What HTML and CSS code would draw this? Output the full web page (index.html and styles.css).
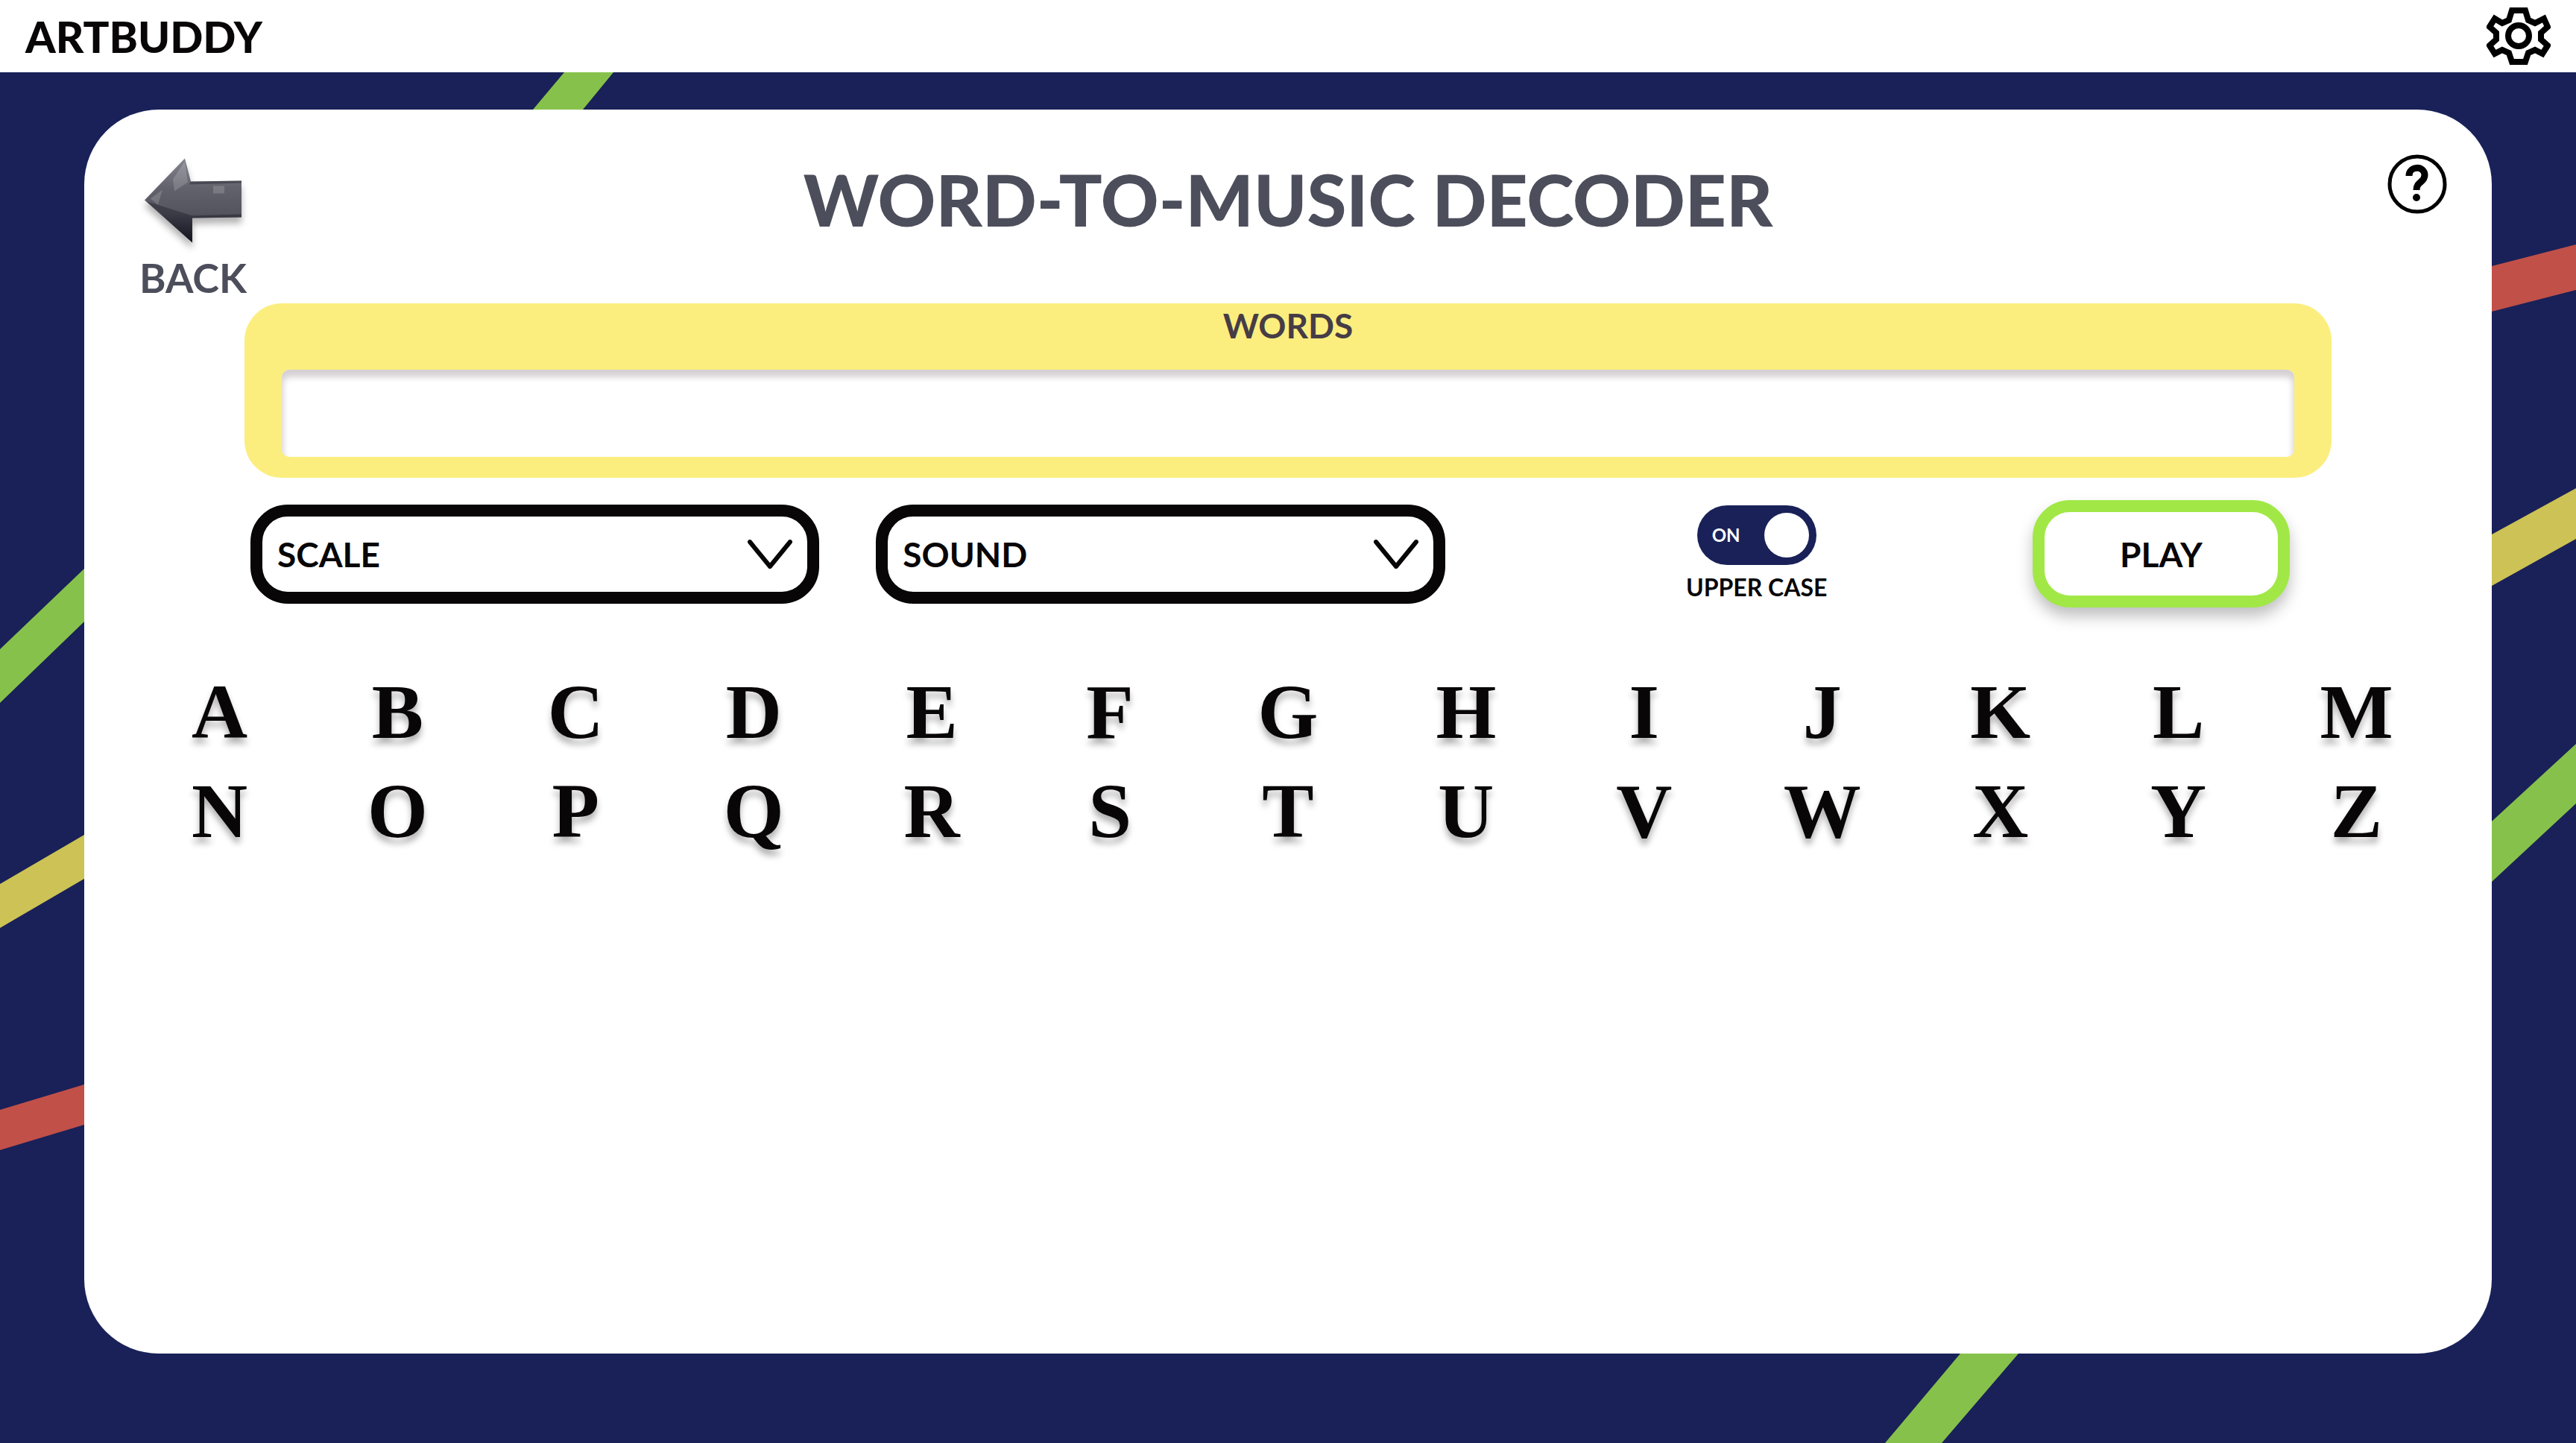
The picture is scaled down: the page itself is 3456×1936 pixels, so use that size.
FILE: index.html
```html
<!DOCTYPE html>
<html lang="en">
<head>
<meta charset="utf-8">
<meta name="viewport" content="width=device-width, initial-scale=1">
<title>ArtBuddy – Word-to-Music Decoder</title>
<link rel="stylesheet" href="styles.css">
</head>
<body>
<header class="topbar">
  <a class="brand" href="#">ARTBUDDY</a>
  <button class="icon-button" type="button" aria-label="Settings">
    <svg class="gear" viewBox="0 0 86 77" fill="none" stroke="#000" stroke-width="8">
      <path d="M34 4H52L56 17L65 21L77 15L82 26L73 34V43L82 51L75 62L65 57L56 61L52 73H34L30 61L21 57L11 62L4 51L13 43V34L4 26L11 15L21 21L30 17Z"/>
      <circle cx="43" cy="38" r="14"/>
    </svg>
  </button>
</header>
<main class="stage">
  <svg class="stripes" viewBox="0 0 3456 1839" preserveAspectRatio="none" aria-hidden="true">
    <path class="green" d="M757 0H823L782 50H715ZM0 774L113 666V737L0 846ZM2630 1719H2708L2605 1839H2529ZM3343 1005L3456 901V981L3343 1086Z"/>
    <path class="yellow" d="M0 1089L113 1023V1082L0 1148ZM3343 620L3456 558V626L3343 689Z"/>
    <path class="red" d="M0 1392L113 1358V1412L0 1446ZM3343 260L3456 231V292L3343 321Z"/>
  </svg>
  <section class="card">
    <div class="card-head">
      <a class="back" href="#">
        <svg class="arrow" viewBox="0 0 130 113">
          <defs>
            <linearGradient id="slate" x1="0" y1="0" x2="0" y2="1">
              <stop offset="0" stop-color="#85858f"/>
              <stop offset=".35" stop-color="#62626c"/>
              <stop offset=".65" stop-color="#54545f"/>
              <stop offset="1" stop-color="#151521"/>
            </linearGradient>
          </defs>
          <path fill="url(#slate)" d="M0 56L54 0L62 31L130 30V79L64 80V113Z"/>
          <path fill="#fff" opacity=".16" d="M92 37H107V47H92ZM38 28L54 4L58 32L40 44ZM8 54L24 42L18 62Z"/>
          <path fill="#11111c" opacity=".35" d="M62 31L130 30V33L60 35ZM64 77L130 75V79L64 80V113L3 58L10 60Z"/>
        </svg>
        <span>BACK</span>
      </a>
      <h1 class="title">WORD-TO-MUSIC DECODER</h1>
      <button class="icon-button help" type="button" aria-label="Help">
        <svg class="help-icon" viewBox="0 0 80 80" fill="none" stroke="#000">
          <circle cx="40" cy="40" r="37" stroke-width="5"/>
          <path d="M29 29C29 15 50 15 50 28C50 38 39 36 39 48" stroke-width="9"/>
          <circle cx="39" cy="58" r="5" fill="#000" stroke="none"/>
        </svg>
      </button>
    </div>
    <form class="decoder">
      <div class="words">
        <label for="words">WORDS</label>
        <input id="words" type="text" autocomplete="off">
      </div>
      <div class="controls">
        <div class="picker">
          <select aria-label="Scale"><option>SCALE</option></select>
          <svg viewBox="0 0 60 40" aria-hidden="true"><path d="M3 3L30 36L57 3"/></svg>
        </div>
        <div class="picker">
          <select aria-label="Sound"><option>SOUND</option></select>
          <svg viewBox="0 0 60 40" aria-hidden="true"><path d="M3 3L30 36L57 3"/></svg>
        </div>
        <label class="toggle">
          <input type="checkbox" checked>
          <span class="track"><span>ON</span><span class="knob"></span></span>
          <span>UPPER CASE</span>
        </label>
        <button class="play" type="button">PLAY</button>
      </div>
    </form>
    <div class="letters">
      <button type="button">A</button><button type="button">B</button><button type="button">C</button><button type="button">D</button><button type="button">E</button><button type="button">F</button><button type="button">G</button><button type="button">H</button><button type="button">I</button><button type="button">J</button><button type="button">K</button><button type="button">L</button><button type="button">M</button>
      <button type="button">N</button><button type="button">O</button><button type="button">P</button><button type="button">Q</button><button type="button">R</button><button type="button">S</button><button type="button">T</button><button type="button">U</button><button type="button">V</button><button type="button">W</button><button type="button">X</button><button type="button">Y</button><button type="button">Z</button>
    </div>
  </section>
</main>
</body>
</html>
```
FILE: styles.css
```css
* {
  box-sizing: border-box;
}

body {
  margin: 0;
  min-height: 100vh;
  display: flex;
  flex-direction: column;
  background: #192158;
  color: #080607;
  font-family: Lato, "Open Sans", sans-serif;
  font-weight: 700;
}

button,
input,
select {
  font: inherit;
  color: inherit;
}

button {
  padding: 0;
  border: 0;
  background: none;
  cursor: pointer;
}

a {
  color: inherit;
  text-decoration: none;
}

svg {
  display: block;
}

.topbar {
  height: 97px;
  padding: 0 34px;
  display: flex;
  align-items: center;
  justify-content: space-between;
  background: #fff;
}

.brand {
  font-size: 58px;
  font-weight: 900;
  line-height: 80px;
}

.gear {
  width: 86px;
  height: 77px;
}

.stage {
  position: relative;
  flex: 1;
  display: flex;
  padding: 50px 113px 120px;
}

.stripes {
  position: absolute;
  inset: 0;
  width: 100%;
  height: 100%;
}

.green {
  fill: #86c24b;
}

.yellow {
  fill: #cdc255;
}

.red {
  fill: #c15048;
}

.card {
  position: relative;
  flex: 1;
  border-radius: 100px;
  background: #fff;
}

.card-head {
  height: 260px;
  padding: 60px 60px 0;
  display: grid;
  grid-template-columns: 1fr auto 1fr;
  align-items: start;
}

.back {
  justify-self: start;
  padding: 4px 0 0 14px;
  display: flex;
  flex-direction: column;
  align-items: center;
  gap: 16px;
  color: #4c4e5b;
  font-size: 54px;
  line-height: 60px;
}

.arrow {
  width: 130px;
  height: 116px;
  filter: drop-shadow(0 8px 5px rgba(0, 0, 0, .3));
}

.title {
  margin: 0;
  color: #4c4e5b;
  font-size: 96px;
  font-weight: 900;
  line-height: 120px;
}

.help {
  justify-self: end;
}

.help-icon {
  width: 80px;
  height: 80px;
}

.decoder {
  padding: 0 215px;
}

.words {
  height: 234px;
  padding: 0 50px 28px;
  display: flex;
  flex-direction: column;
  justify-content: space-between;
  border-radius: 50px;
  background: #fbee7e;
}

.words label {
  color: #463c46;
  font-size: 46px;
  line-height: 60px;
  text-align: center;
}

.words input {
  width: 100%;
  height: 117px;
  padding: 0 24px;
  border: 0;
  border-radius: 10px;
  background: #fff;
  box-shadow: inset 0 8px 8px 2px #d6d0d3;
}

.controls {
  padding: 30px 56px 0 8px;
  display: grid;
  grid-template-columns: 763fr 763fr 636fr 345fr;
  column-gap: 76px;
  align-items: center;
}

.picker {
  position: relative;
}

.picker select {
  width: 100%;
  height: 133px;
  padding: 0 20px;
  appearance: none;
  border: 16px solid #080607;
  border-radius: 50px;
  background: #fff;
  font-size: 46px;
}

.picker svg {
  position: absolute;
  top: 47px;
  right: 36px;
  width: 60px;
  height: 40px;
  fill: none;
  stroke: #080607;
  stroke-width: 6;
  stroke-linecap: round;
  stroke-linejoin: round;
  pointer-events: none;
}

.toggle {
  position: relative;
  padding-left: 48px;
  display: flex;
  flex-direction: column;
  align-items: center;
  gap: 10px;
  font-size: 32px;
  line-height: 40px;
}

.toggle input {
  position: absolute;
  opacity: 0;
}

.track {
  width: 160px;
  height: 80px;
  padding: 0 10px 0 20px;
  display: flex;
  align-items: center;
  justify-content: space-between;
  border-radius: 40px;
  background: #192158;
  color: #fff;
  font-size: 24px;
}

.knob {
  width: 60px;
  height: 60px;
  border-radius: 50%;
  background: #fff;
}

.play {
  height: 144px;
  border: 16px solid #a1e847;
  border-radius: 50px;
  background: #fff;
  box-shadow: 0 12px 20px rgba(0, 0, 0, .25);
  font-size: 46px;
}

.letters {
  padding: 73px 62px 0;
  display: grid;
  grid-template-columns: repeat(13, 1fr);
}

.letters button {
  height: 133px;
  font-family: "Liberation Serif", serif;
  font-size: 104px;
  line-height: 133px;
  text-shadow: 0 8px 8px rgba(0, 0, 0, .3);
}
```
